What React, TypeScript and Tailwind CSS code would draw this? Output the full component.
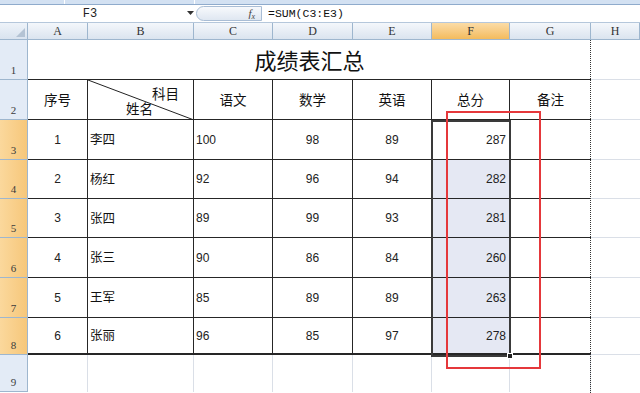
import React from 'react';

const cjk = "font-['Noto_Sans_CJK_SC','Noto_Sans',sans-serif]";
const num = "font-['Liberation_Sans',Arial,sans-serif]";

const cols = ['A', 'B', 'C', 'D', 'E', 'F', 'G', 'H'];

const rows = [
  { no: '1', name: '李四', c: '100', d: '98', e: '89', f: '287' },
  { no: '2', name: '杨红', c: '92', d: '96', e: '94', f: '282' },
  { no: '3', name: '张四', c: '89', d: '99', e: '93', f: '281' },
  { no: '4', name: '张三', c: '90', d: '86', e: '84', f: '260' },
  { no: '5', name: '王军', c: '85', d: '89', e: '89', f: '263' },
  { no: '6', name: '张丽', c: '96', d: '85', e: '97', f: '278' },
];

const RowHead = ({ n, sel }: { n: string; sel?: boolean }) => (
  <div
    className={`flex items-end justify-center pb-[1px] border-r border-b border-[#9eb6ce] text-[11px] text-[#3b3b3b] font-['Liberation_Serif',serif] ${
      sel ? 'bg-gradient-to-r from-[#fbd89c] to-[#f6c77a]' : 'bg-[#e3ebf6]'
    }`}
  >
    {n}
  </div>
);

export default function App() {
  return (
    <div className="relative w-[640px] h-[393px] overflow-hidden bg-white">
      {/* ribbon edge + formula bar */}
      <div className="h-[4px] bg-[#d3e1f2] flex">
        <div className="w-[65px] border-r border-white" />
        <div className="w-[130px] border-r border-white" />
      </div>
      <div className="h-px bg-[#8fabcc]" />
      <div className="h-[17px] flex items-center bg-white">
        <div className="w-[196px] h-full flex items-center relative">
          <span className="w-[180px] text-center text-[12px] text-[#222] font-['Liberation_Mono',monospace]">F3</span>
          <svg className="absolute left-[187px] top-[6px]" width="7" height="5" viewBox="0 0 7 5">
            <path d="M0 0 L7 0 L3.5 4 Z" fill="#333" />
          </svg>
        </div>
        <div className="w-[66px] h-[15px] rounded-l-full border border-[#a9bdd5] bg-gradient-to-b from-[#f7f9fc] to-[#dfe7f1] flex items-center justify-end pr-[6px]">
          <span className="text-[11px] italic text-[#444] font-['Liberation_Serif',serif]">
            f<sub className="text-[8px]">x</sub>
          </span>
        </div>
        <span className="ml-[6px] text-[11.5px] text-[#111] font-['Liberation_Mono',monospace]">=SUM(C3:E3)</span>
      </div>
      <div className="h-px bg-[#b5c7db]" />

      {/* sheet grid */}
      <div className="grid grid-cols-[28px_60px_106px_79px_80px_79px_78px_81px_49px] grid-rows-[17px_40px_40px_40px_39px_39px_40px_40px_37px_37px]">
        {/* corner */}
        <div className="relative border-r border-b border-[#9eb6ce] bg-gradient-to-b from-[#eef3f9] to-[#d9e3ef]">
          <svg className="absolute right-[2px] bottom-[2px]" width="9" height="9" viewBox="0 0 9 9">
            <path d="M9 0 L9 9 L0 9 Z" fill="#b4c3d4" />
          </svg>
        </div>
        {cols.map((c) => (
          <div
            key={c}
            className={`flex items-center justify-center border-r border-b border-[#9eb6ce] text-[12px] text-[#333] font-['Liberation_Serif',serif] ${
              c === 'F' ? 'bg-gradient-to-b from-[#fbdca6] to-[#f3bb5c]' : 'bg-gradient-to-b from-[#f4f7fb] to-[#dbe4ef]'
            }`}
          >
            {c}
          </div>
        ))}

        {/* row 1: title */}
        <RowHead n="1" />
        <div className={`col-span-7 flex items-center justify-center border-b border-[#262626] text-[22px] text-[#111] ${cjk}`}>
          成绩表汇总
        </div>
        <div className="border-b border-[#dadfe7]" />

        {/* row 2: headers */}
        <RowHead n="2" />
        <div className={`flex items-center justify-center border-r border-b border-[#262626] text-[13.5px] text-[#111] ${cjk}`}>序号</div>
        <div className={`relative border-r border-b border-[#262626] text-[13.5px] text-[#111] ${cjk}`}>
          <svg className="absolute inset-0" width="106" height="40" viewBox="0 0 106 40">
            <line x1="0" y1="0" x2="106" y2="40" stroke="#222" strokeWidth="1" />
          </svg>
          <span className="absolute left-[64px] top-[3px]">科目</span>
          <span className="absolute left-[38px] top-[18px]">姓名</span>
        </div>
        {['语文', '数学', '英语', '总分'].map((h) => (
          <div key={h} className={`flex items-center justify-center border-r border-b border-[#262626] text-[13.5px] text-[#111] ${cjk}`}>
            {h}
          </div>
        ))}
        <div className={`flex items-center justify-center border-b border-[#262626] text-[13.5px] text-[#111] ${cjk}`}>备注</div>
        <div className="border-b border-[#dadfe7]" />

        {/* data rows */}
        {rows.map((r, i) => {
          const last = i === rows.length - 1;
          const b = last ? 'border-b-2' : 'border-b';
          return (
            <React.Fragment key={r.no}>
              <RowHead n={String(i + 3)} sel />
              <div className={`flex items-center justify-center border-r ${b} border-[#262626] text-[12px] text-[#222] ${num}`}>{r.no}</div>
              <div className={`flex items-center pl-[2px] border-r ${b} border-[#262626] text-[12.5px] text-[#111] ${cjk}`}>{r.name}</div>
              <div className={`flex items-center pl-[2px] border-r ${b} border-[#262626] text-[12px] text-[#222] ${num}`}>{r.c}</div>
              <div className={`flex items-center justify-center border-r ${b} border-[#262626] text-[12px] text-[#222] ${num}`}>{r.d}</div>
              <div className={`flex items-center justify-center border-r ${b} border-[#262626] text-[12px] text-[#222] ${num}`}>{r.e}</div>
              <div
                className={`flex items-center justify-end pr-[3px] border-r ${b} border-[#262626] text-[12px] text-[#222] ${num} ${
                  i === 0 ? 'bg-white' : 'bg-[#e5e8f3]'
                }`}
              >
                {r.f}
              </div>
              <div className={`${b} border-[#262626]`} />
              <div className="border-b border-[#dadfe7]" />
            </React.Fragment>
          );
        })}

        {/* row 9 */}
        <RowHead n="9" />
        {cols.map((c) => (
          <div key={c} className={c === 'H' ? '' : 'border-r border-[#dadfe7]'} />
        ))}
      </div>

      {/* selection box F3:F8 */}
      <div className="absolute left-[431px] top-[120px] w-[80px] h-[237px] border-2 border-[#3a3a3a] pointer-events-none" />
      <div className="absolute left-[507px] top-[353px] w-[6px] h-[6px] bg-[#222] border border-white" />

      {/* page break */}
      <div className="absolute left-[590px] top-[40px] h-[353px] border-l border-dotted border-[#333]" />

      {/* red highlight */}
      <div className="absolute left-[446px] top-[111px] w-[95px] h-[258px] border-2 border-[#e5383b]" />
    </div>
  );
}
